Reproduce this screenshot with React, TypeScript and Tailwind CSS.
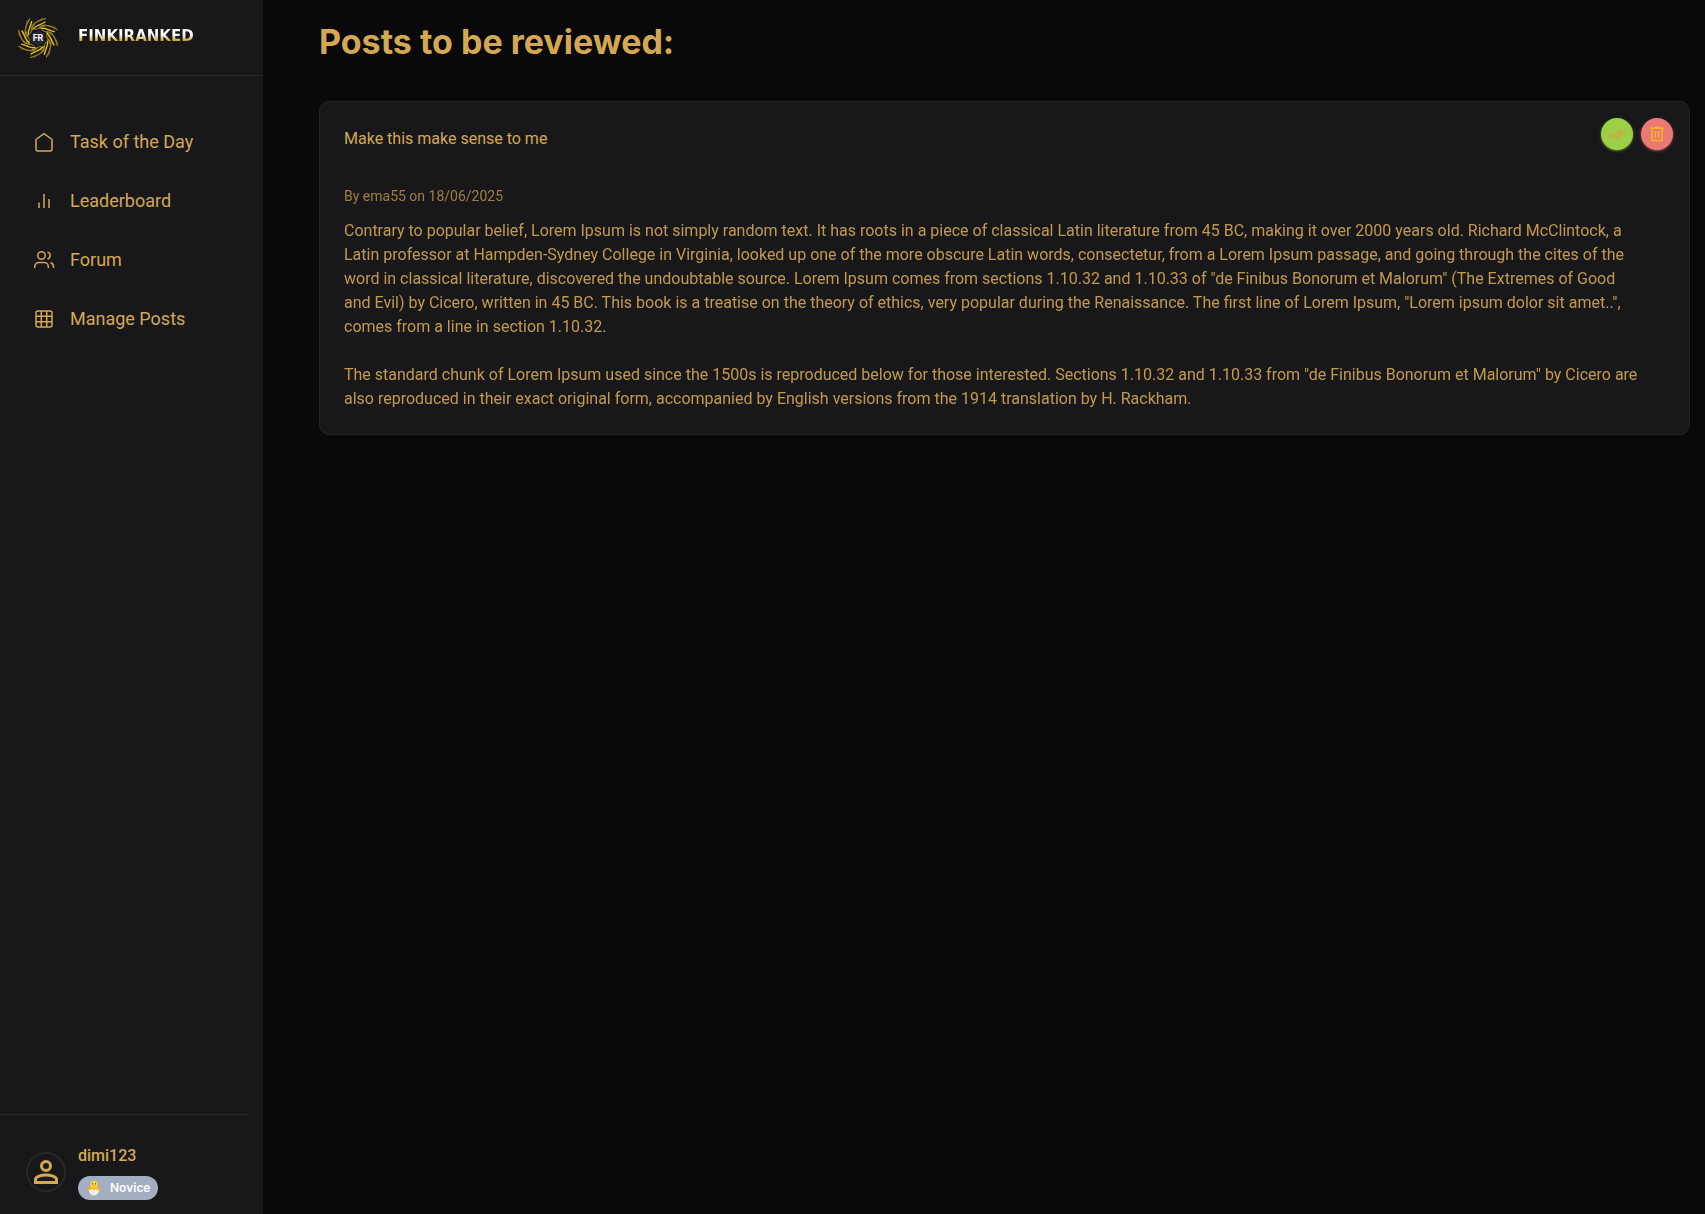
import { ReactNode } from 'react';

type TNavItem = { label: string; icon: ReactNode };
type TPost = { id: number; title: string; author: string; date: string; content: string };

const navItems: TNavItem[] = [
    {
        label: 'Task of the Day',
        icon: <path d="M4 9.500 12 3.600l8 5.900V19a2 2 0 0 1-2 2H6a2 2 0 0 1-2-2z" />,
    },
    {
        label: 'Leaderboard',
        icon: <path d="M7 19v-5.500M12 19V5M17 19v-9" />,
    },
    {
        label: 'Forum',
        icon: (
            <>
                <circle cx="9.500" cy="7.500" r="3.700" />
                <path d="M2.700 20v-1.500a4 4 0 0 1 4-4h5.600a4 4 0 0 1 4 4V20M15.500 3.900a3.800 3.800 0 0 1 0 7.200M18.500 14.700a4 4 0 0 1 3 3.800V20" />
            </>
        ),
    },
    {
        label: 'Manage Posts',
        icon: (
            <>
                <rect x="4" y="4" width="16" height="16" rx="2" />
                <path d="M4 9.300h16M4 14.700h16M9.300 4v16M14.700 4v16" />
            </>
        ),
    },
];

const posts: TPost[] = [
    {
        id: 1,
        title: 'Make this make sense to me',
        author: 'ema55',
        date: '18/06/2025',
        content:
            'Contrary to popular belief, Lorem Ipsum is not simply random text. It has roots in a piece of classical Latin literature from 45 BC, making it over 2000 years old. Richard McClintock, a Latin professor at Hampden-Sydney College in Virginia, looked up one of the more obscure Latin words, consectetur, from a Lorem Ipsum passage, and going through the cites of the word in classical literature, discovered the undoubtable source. Lorem Ipsum comes from sections 1.10.32 and 1.10.33 of "de Finibus Bonorum et Malorum" (The Extremes of Good and Evil) by Cicero, written in 45 BC. This book is a treatise on the theory of ethics, very popular during the Renaissance. The first line of Lorem Ipsum, "Lorem ipsum dolor sit amet..", comes from a line in section 1.10.32.\n\nThe standard chunk of Lorem Ipsum used since the 1500s is reproduced below for those interested. Sections 1.10.32 and 1.10.33 from "de Finibus Bonorum et Malorum" by Cicero are also reproduced in their exact original form, accompanied by English versions from the 1914 translation by H. Rackham.',
    },
];

const leaves = [0, 45, 90, 135, 180, 225, 270, 315];

function Logo() {
    return (
        <svg viewBox="0 0 44 44" className="size-11 shrink-0" aria-hidden="true">
            {leaves.map((angle) => (
                <g key={angle} transform={`rotate(${angle} 22 22)`} fill="none" strokeLinecap="round">
                    <path d="M15.500 14C15.500 8 19 6 29.500 2.500" stroke="#a88d1c" strokeWidth="1.100" />
                    <path d="M17.500 10.500C19 5.500 23 5 26.500 2.200" stroke="#8d7718" strokeWidth=".9" />
                    <path d="M17.500 13C20 9 24 9.500 29 6" stroke="#d9bc2b" strokeWidth="1.500" />
                    <path d="M19.500 13.500c3-1 5-1 8-4.200" stroke="#9c8319" strokeWidth=".9" />
                </g>
            ))}
            <circle cx="22" cy="22" r="7" fill="#26262c" />
            <text x="22" y="25" textAnchor="middle" fontSize="9" fontWeight="700" fill="#f4f4f5">
                FR
            </text>
        </svg>
    );
}

function HatchingChick() {
    return (
        <svg viewBox="0 0 16 16" className="size-4" aria-hidden="true">
            <path d="M.8 6.800c2-.5 3 .5 3.700 2h7c.7-1.500 1.700-2.500 3.700-2-.2 2.500-1.500 4-4 4H5c-2.500 0-4-1.500-4.200-4z" fill="#f5a623" />
            <circle cx="8" cy="4.500" r="3.700" fill="#fcd535" />
            <path d="M4.500 7h7v3h-7z" fill="#fbc02d" />
            <circle cx="6.600" cy="3.800" r=".6" fill="#4a3518" />
            <circle cx="9.400" cy="3.800" r=".6" fill="#4a3518" />
            <path d="M7 5h2L8 6.300z" fill="#e8710a" />
            <path d="M2.700 9l1.800 1.200L6.300 9 8 10.200 9.700 9l1.800 1.200L13.300 9c0 4-2.300 6.500-5.300 6.500S2.700 13 2.700 9z" fill="#f1ede4" />
        </svg>
    );
}

function Sidebar() {
    return (
        <aside className="flex w-[263px] shrink-0 flex-col bg-[#18181b]">
            <a href="#" className="flex h-[76px] items-center gap-[18px] border-b border-[#2d2a22] pl-4">
                <Logo />
                <span className="mb-1 bg-linear-to-b from-white from-40% to-[#c9a41c] to-80% bg-clip-text font-['DejaVu_Sans'] text-[15px] leading-4 font-bold text-transparent">
                    FINKIRANKED
                </span>
            </a>
            <nav className="flex flex-col gap-8 px-8 pt-[52px]">
                {navItems.map((item) => (
                    <a key={item.label} href="#" className="flex items-center gap-[14px] text-lg leading-[27px]">
                        <svg
                            viewBox="0 0 24 24"
                            className="size-6"
                            fill="none"
                            stroke="currentColor"
                            strokeWidth="1.5"
                            strokeLinejoin="round"
                            aria-hidden="true"
                        >
                            {item.icon}
                        </svg>
                        {item.label}
                    </a>
                ))}
            </nav>
            <div className="mt-auto mr-[13px] flex items-center gap-3 border-t border-[#2d2720] pt-[29px] pb-[14px] pl-[26px]">
                <div className="flex size-10 items-center justify-center rounded-full border-2 border-[#2b2722]">
                    <svg viewBox="0 0 24 24" className="size-6" fill="none" stroke="currentColor" strokeWidth="3" aria-hidden="true">
                        <circle cx="12" cy="6" r="4.500" />
                        <path d="M1.500 22.500v-3c0-3 6-4.500 10.500-4.500s10.500 1.500 10.500 4.500v3z" />
                    </svg>
                </div>
                <div className="flex flex-col items-start gap-2">
                    <span className="leading-6 font-medium">dimi123</span>
                    <span className="flex h-6 items-center gap-2 rounded-full bg-[#a3aec0] px-2 font-['Inter',sans-serif] text-xs font-semibold text-white">
                        <HatchingChick />
                        Novice
                    </span>
                </div>
            </div>
        </aside>
    );
}

function PostCard({ post }: { post: TPost }) {
    return (
        <article className="relative rounded-[10px] border border-[#232326] bg-[#18181b] px-6 pt-[25px] pb-[23px]">
            <h2 className="leading-6">{post.title}</h2>
            <p className="mt-[35px] text-sm leading-5 opacity-70">
                By {post.author} on {post.date}
            </p>
            <p className="mt-[13px] pr-6 leading-6 whitespace-pre-line opacity-90">{post.content}</p>
            <div className="absolute top-4 right-4 flex gap-2">
                <button aria-label="Approve post" className="flex size-8 items-center justify-center rounded-full bg-[#9bcf45] shadow-sm shadow-[#9bcf45]/50">
                    <svg viewBox="0 0 20 20" className="size-5" fill="none" stroke="#d9a04f" strokeWidth="1.700" aria-hidden="true">
                        <path d="M1.300 10l4.400 4M6.300 10l3.900 4 8.500-8.300M9.700 9.600 14 5.700" />
                    </svg>
                </button>
                <button aria-label="Delete post" className="flex size-8 items-center justify-center rounded-full bg-[#ec7873] shadow-sm shadow-[#ec7873]/50">
                    <svg viewBox="0 0 16 16" className="size-4" fill="none" stroke="#f5b32a" strokeWidth="1.600" aria-hidden="true">
                        <path d="M1 2.200h14M5.500 1h5M2.900 2.200v12.300h10.200V2.200M6.400 5v7M9.600 5v7" />
                    </svg>
                </button>
            </div>
        </article>
    );
}

export default function App() {
    return (
        <div className="flex min-h-screen bg-[#09090b] font-['Roboto',sans-serif] text-[#d4a853]">
            <Sidebar />
            <main className="min-w-0 flex-1 pr-[15px] pl-14">
                <h1 className="pt-5 font-['Inter',sans-serif] text-[34px] leading-[44px] font-bold">Posts to be reviewed:</h1>
                <section className="mt-[37px] flex flex-col gap-6">
                    {posts.map((post) => (
                        <PostCard key={post.id} post={post} />
                    ))}
                </section>
            </main>
        </div>
    );
}
